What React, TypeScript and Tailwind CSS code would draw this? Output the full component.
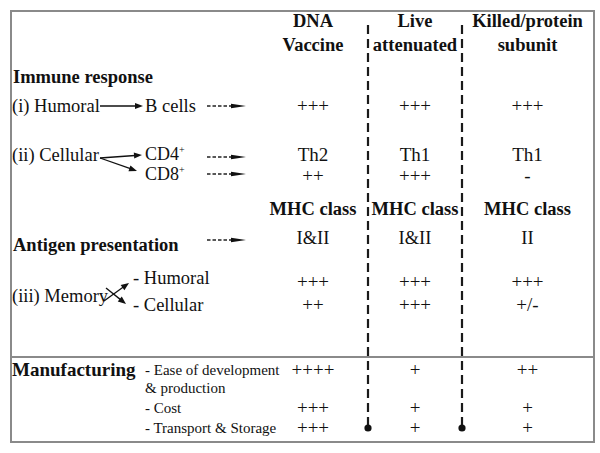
import React from "react";

function Head({ x1, y1, x2, y2, len = 8, w = 3 }: { x1: number; y1: number; x2: number; y2: number; len?: number; w?: number }) {
  const dx = x2 - x1;
  const dy = y2 - y1;
  const d = Math.sqrt(dx * dx + dy * dy);
  const ux = dx / d;
  const uy = dy / d;
  const bx = x2 - ux * len;
  const by = y2 - uy * len;
  const px = -uy * w;
  const py = ux * w;
  return (
    <g>
      <line x1={x1} y1={y1} x2={bx + ux * 1} y2={by + uy * 1} stroke="#111" strokeWidth={1.3} />
      <polygon points={`${bx + px},${by + py} ${x2},${y2} ${bx - px},${by - py}`} fill="#111" />
    </g>
  );
}

function Dashed({ y }: { y: number }) {
  return (
    <g>
      <line x1={207} y1={y} x2={232} y2={y} stroke="#222" strokeWidth={1.4} strokeDasharray="3.5 2" />
      <polygon points={`${231},${y - 2.3} ${246},${y} ${231},${y + 2.3}`} fill="#111" />
    </g>
  );
}

const cols = "grid grid-cols-[246px_110px_94px_131px]";

export default function App() {
  return (
    <div className="relative w-[600px] h-[453px] overflow-hidden bg-white text-[#111] font-['Liberation_Serif','Times_New_Roman',serif]">
      <div className="pt-[10px] pl-[10px]">
        <div className="w-[585px] h-[433px] border-2 border-[#8a8a8a] flex flex-col">
          {/* header */}
          <div className={`${cols} -mt-[3px] font-bold text-[18.5px] leading-[24px] text-center`}>
            <div />
            <div>DNA<br />Vaccine</div>
            <div>Live<br />attenuated</div>
            <div>Killed/protein<br />subunit</div>
          </div>

          {/* immune response */}
          <div className={`${cols} h-[40px]`}>
            <div className="pl-[1px] font-bold text-[18.5px] leading-[40px]">Immune response</div>
          </div>

          {/* humoral */}
          <div className={`${cols} h-[18px] text-[18.5px] leading-[18px]`}>
            <div className="flex">
              <span className="w-[133px] shrink-0">(i) Humoral</span>
              <span>B cells</span>
            </div>
            <div className="text-center text-[19px]">+++</div>
            <div className="text-center text-[19px]">+++</div>
            <div className="text-center text-[19px]">+++</div>
          </div>

          <div className="h-[31px]" />

          {/* cellular */}
          <div className={`${cols} h-[40px] text-[18.5px] leading-[18px]`}>
            <div className="flex">
              <span className="w-[133px] shrink-0">(ii) Cellular</span>
              <div className="flex flex-col -mt-[1px] text-[18px]">
                <span>CD4<span className="text-[10px] leading-none align-[7px]">+</span></span>
                <span className="mt-[2px]">CD8<span className="text-[10px] leading-none align-[7px]">+</span></span>
              </div>
            </div>
            {[["Th2", "++"], ["Th1", "+++"], ["Th1", "-"]].map((v, i) => (
              <div key={i} className="flex flex-col items-center text-[19px]">
                <span>{v[0]}</span>
                <span className="mt-[3px]">{v[1]}</span>
              </div>
            ))}
          </div>

          <div className="h-[14px]" />

          {/* MHC class */}
          <div className={`${cols} h-[18px] font-bold text-[18.5px] leading-[18px] text-center`}>
            <div />
            <div className="whitespace-nowrap">MHC class</div>
            <div className="whitespace-nowrap">MHC class</div>
            <div className="whitespace-nowrap">MHC class</div>
          </div>

          <div className="h-[8px]" />

          {/* antigen presentation */}
          <div className={`${cols} h-[28px] text-[18.5px]`}>
            <div className="pt-[10px] pl-[1px] font-bold leading-[18px] whitespace-nowrap">Antigen presentation</div>
            <div className="text-center leading-[24px]">I&amp;II</div>
            <div className="text-center leading-[24px]">I&amp;II</div>
            <div className="text-center leading-[24px]">II</div>
          </div>

          <div className="h-[8px]" />

          {/* memory */}
          <div className={`${cols} h-[54px] text-[18.5px] leading-[18px]`}>
            <div className="flex">
              <span className="w-[121px] shrink-0 pt-[25px] whitespace-nowrap">(iii) Memory</span>
              <div className="flex flex-col pt-[7px]">
                <span>- Humoral</span>
                <span className="mt-[9px]">- Cellular</span>
              </div>
            </div>
            {[["+++", "++"], ["+++", "+++"], ["+++", "+/-"]].map((v, i) => (
              <div key={i} className="flex flex-col items-center pt-[11px] text-[19px]">
                <span>{v[0]}</span>
                <span className="mt-[5px]">{v[1]}</span>
              </div>
            ))}
          </div>

          <div className="h-[40px]" />
          <div className="h-[2px] bg-[#8a8a8a]" />

          {/* manufacturing */}
          <div className={`${cols} pt-[3px] leading-[18px]`}>
            <div className="flex">
              <span className="w-[133px] shrink-0 font-bold text-[19px]">Manufacturing</span>
              <div className="flex flex-col text-[15px] whitespace-nowrap">
                <span>- Ease of development</span>
                <span>&amp; production</span>
                <span className="mt-[2px]">- Cost</span>
                <span className="mt-[2px]">- Transport &amp; Storage</span>
              </div>
            </div>
            {[["++++", "+++", "+++"], ["+", "+", "+"], ["++", "+", "+"]].map((v, i) => (
              <div key={i} className="flex flex-col items-center text-[19px]">
                <span>{v[0]}</span>
                <span>&nbsp;</span>
                <span className="mt-[2px]">{v[1]}</span>
                <span className="mt-[2px]">{v[2]}</span>
              </div>
            ))}
          </div>
        </div>
      </div>

      {/* drawings: arrows and dashed column separators */}
      <svg className="absolute left-0 top-0 pointer-events-none" width={600} height={453} viewBox="0 0 600 453">
        <Head x1={100} y1={106} x2={143} y2={106} />
        <Head x1={100} y1={158} x2={142} y2={155} />
        <Head x1={100} y1={158} x2={137} y2={171} />
        <Head x1={104} y1={301} x2={129} y2={283} len={8} w={3.2} />
        <Head x1={106} y1={288} x2={126} y2={304} len={8} w={3.2} />
        <Dashed y={106} />
        <Dashed y={157} />
        <Dashed y={174} />
        <Dashed y={240} />
        {[368, 462].map((x) => (
          <g key={x}>
            <line x1={x} y1={25} x2={x} y2={426} stroke="#1a1a1a" strokeWidth={2.2} strokeDasharray="9 5" />
            <circle cx={x} cy={428} r={3.6} fill="#111" />
          </g>
        ))}
      </svg>
    </div>
  );
}
